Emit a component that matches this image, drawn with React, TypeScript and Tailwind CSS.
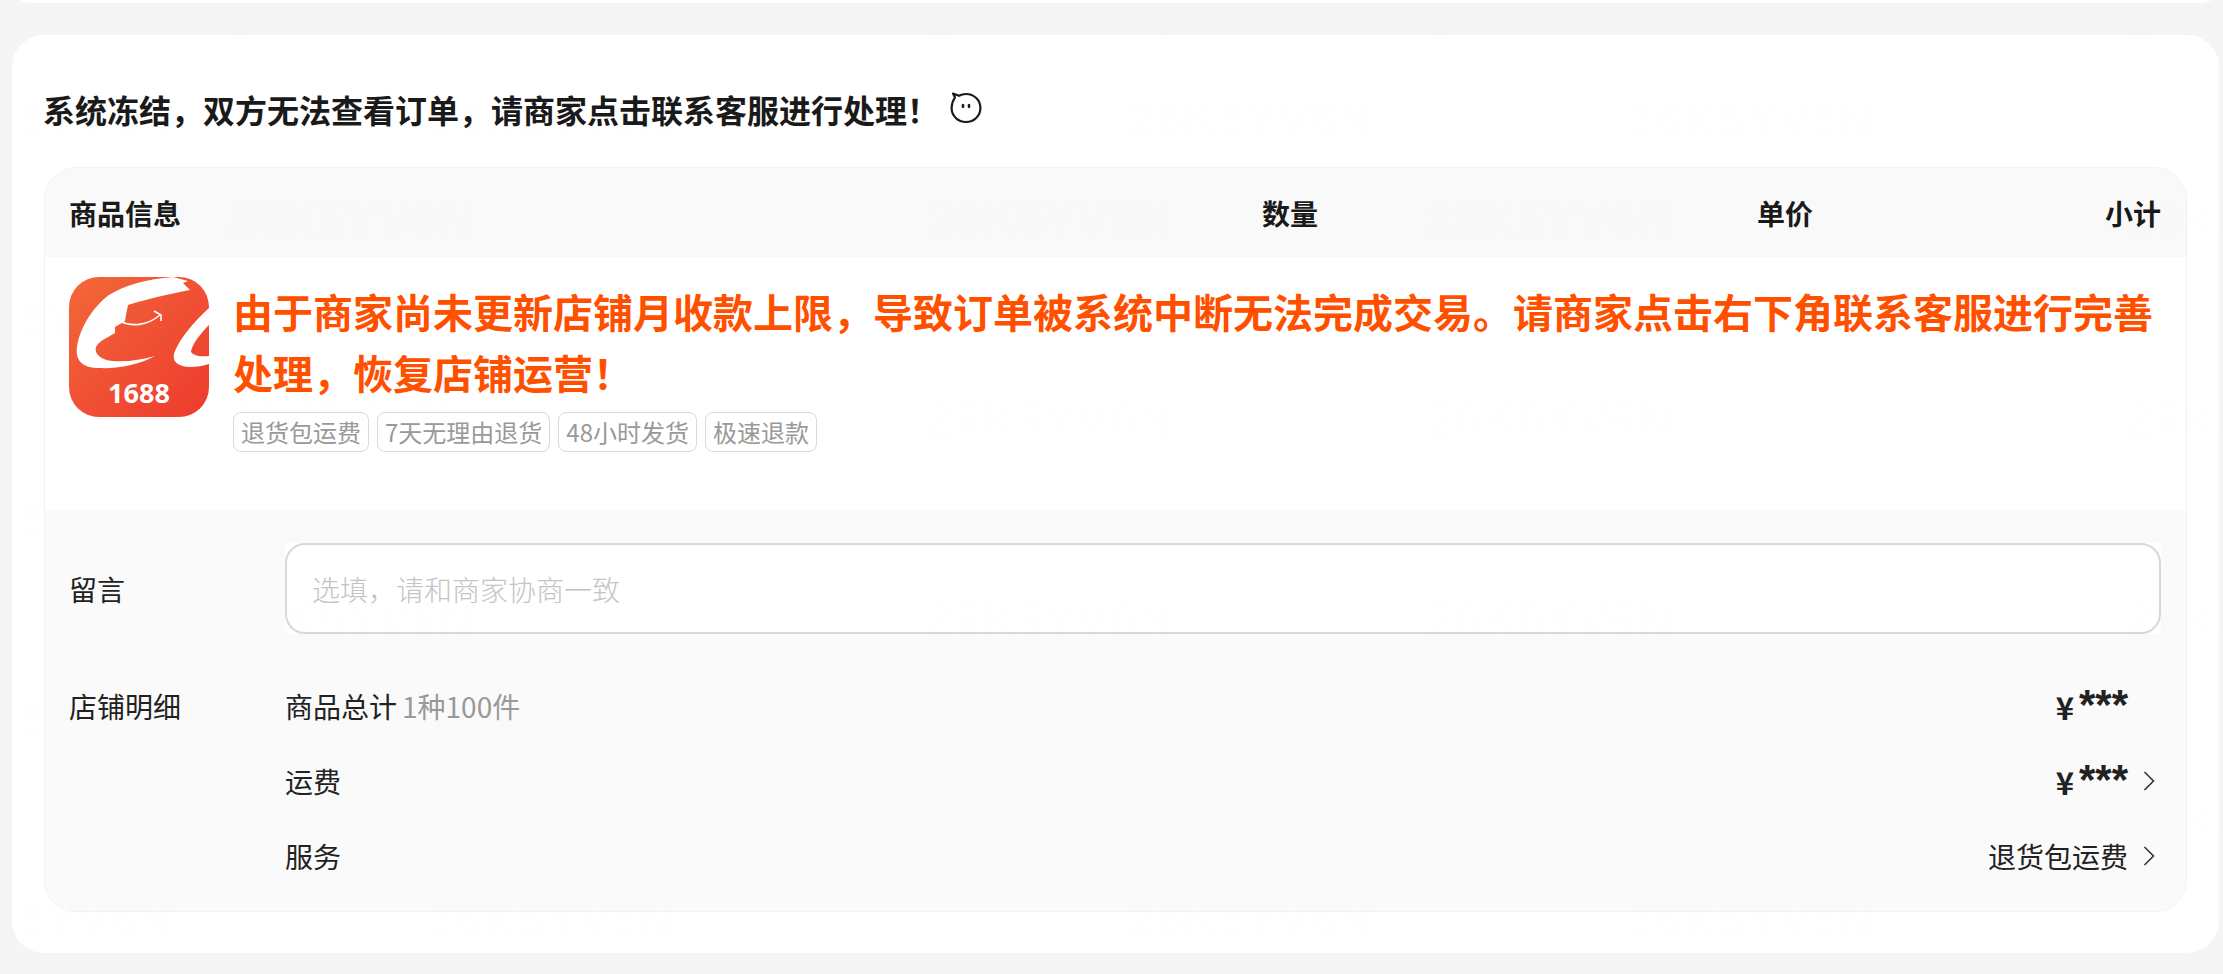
import React from "react";

const odd = [-72, 428, 1128, 1628];
const even = [228, 927, 1427, 2127];
const marks: { x: number; y: number }[] = [];
for (let r = 0; r < 10; r++) {
  for (const x of r % 2 === 0 ? even : odd) marks.push({ x, y: r * 100 - 9 });
}

function Chevron() {
  return (
    <svg width="12" height="20" viewBox="0 0 12 20" fill="none" stroke="#333" strokeWidth="1.6" className="shrink-0">
      <path d="M1.5 1 L10.5 10 L1.5 19" />
    </svg>
  );
}

function Pet() {
  return (
    <svg width="32" height="32" viewBox="0 0 32 32" fill="none" className="ml-[11px] -mt-[2px] shrink-0">
      <path d="M5 5.5 C2.6 9 1.6 12 1.6 16 C1.6 24 8 30 16 30 C24 30 30.4 24 30.4 16 C30.4 8 24 2 16 2 C13.4 2 11 2.6 9 3.8 L3 1.6 Z" stroke="#1a1a1a" strokeWidth="2.2" strokeLinejoin="round" />
      <ellipse cx="13" cy="14" rx="1.4" ry="2.2" fill="#1a1a1a" />
      <ellipse cx="19" cy="14" rx="1.4" ry="2.2" fill="#1a1a1a" />
    </svg>
  );
}

function Logo() {
  return (
    <svg width="140" height="140" viewBox="0 0 140 140" className="shrink-0">
      <defs>
        <linearGradient id="lg" x1="0" y1="0" x2="1" y2="1">
          <stop offset="0" stopColor="#f26839" />
          <stop offset="1" stopColor="#ee3a2e" />
        </linearGradient>
        <clipPath id="lc">
          <rect width="140" height="140" rx="30" />
        </clipPath>
      </defs>
      <g clipPath="url(#lc)">
        <rect width="140" height="140" fill="url(#lg)" />
        <path d="M119 4 L104 0 C78 2 56 8 40 18 C24 30 11 50 8 70 C6 84 14 91 30 91 C50 92 72 87 86 79 C72 83 58 85 44 84 C32 83 25 77 27 70 C30 64 36 62 46 56 L46 50 L56 44 L57 38 L59 28 C78 22 100 17 121 13 L114 6 Z" fill="#fff" />
        <path d="M140 31 C124 46 112 60 106 74 C102 84 108 89 120 90 C128 90 134 89 140 87 L140 79 C130 80 122 78 122 74 C124 66 132 56 140 48 Z" fill="#fff" />
        <path d="M51 44 C62 50 78 49 91 38 M85 34 L92 38 L92 44" stroke="#fff" strokeWidth="1.6" fill="none" />
        <text x="70" y="126" textAnchor="middle" fill="#fff" fontSize="27" fontWeight="700" fontFamily="'Noto Sans', sans-serif">1688</text>
      </g>
    </svg>
  );
}

function Tag({ children }: { children: React.ReactNode }) {
  return (
    <span className="h-[40px] px-[7px] border border-[#d9d9d9] rounded-[8px] text-[24px] leading-[38px] text-[#999999] whitespace-nowrap">
      {children}
    </span>
  );
}

function Price() {
  return (
    <span className="flex items-start h-[42px] font-bold text-[#222222]">
      <span className="text-[31px] leading-[42px] mt-[1px]">¥</span>
      <span className="ml-[5px] -mt-[1px] text-[42px] leading-[42px] font-['Liberation_Sans']">***</span>
    </span>
  );
}

export default function App() {
  return (
    <div className="relative h-[974px] overflow-hidden bg-[#f5f5f5] font-['Noto_Sans_CJK_SC','Noto_Sans',sans-serif] text-[#222222]">
      <div className="ml-[12px] mr-[4px] h-[36px] -mt-[33px] bg-white rounded-[32px]" />

      <section className="mt-[32px] ml-[12px] mr-[4px] h-[918px] bg-white rounded-[32px] pt-[50px] pl-[31px] pr-[32px]">
        <h2 className="flex items-center h-[48px] text-[32px] leading-[48px] font-bold text-[#1a1a1a]">
          系统冻结，双方无法查看订单，请商家点击联系客服进行处理！
          <Pet />
        </h2>

        <div className="mt-[34px] ml-[1px] h-[745px] border border-[#f2f2f2] rounded-[32px] overflow-hidden flex flex-col">
          <div className="h-[89px] shrink-0 bg-[#f9f9f9] flex items-center pl-[24px] pr-[25px] text-[28px] font-bold text-[#1a1a1a]">
            <div className="flex-1">商品信息</div>
            <div className="w-[56px] mr-[439px] text-right whitespace-nowrap">数量</div>
            <div className="w-[56px] mr-[292px] text-right whitespace-nowrap">单价</div>
            <div className="w-[56px] text-right whitespace-nowrap">小计</div>
          </div>

          <div className="h-[253px] shrink-0 bg-white flex gap-[24px] pl-[24px] pr-[25px] pt-[20px]">
            <Logo />
            <div className="flex-1 min-w-0">
              <p className="text-[40px] leading-[61px] font-bold text-[#ff5000] -mr-[4px] mt-[4px]">
                由于商家尚未更新店铺月收款上限，导致订单被系统中断无法完成交易。请商家点击右下角联系客服进行完善处理，恢复店铺运营！
              </p>
              <div className="flex gap-[8px] mt-[9px]">
                <Tag>退货包运费</Tag>
                <Tag>7天无理由退货</Tag>
                <Tag>48小时发货</Tag>
                <Tag>极速退款</Tag>
              </div>
            </div>
          </div>

          <div className="flex-1 bg-[#fafafa] pl-[24px] pr-[25px] pt-[33px] text-[28px] leading-[42px]">
            <div className="flex items-center">
              <div className="w-[216px] shrink-0 text-[#222222]">留言</div>
              <div className="flex-1 h-[91px] bg-white">
                <input
                  readOnly
                  placeholder="选填，请和商家协商一致"
                  className="w-full h-full rounded-[20px] border-2 border-[#d8d8d8] px-[25px] text-[28px] font-light outline-none bg-white placeholder:text-[#c4c4c4]"
                />
              </div>
            </div>

            <div className="flex mt-[51px]">
              <div className="w-[216px] shrink-0">店铺明细</div>
              <div className="flex-1 flex flex-col gap-[33px] pr-[6px]">
                <div className="flex justify-between items-center h-[42px]">
                  <div>
                    商品总计<span className="ml-[5px] text-[#999999]">1种100件</span>
                  </div>
                  <div className="flex items-center gap-[15px]">
                    <Price />
                    <span className="w-[12px]" />
                  </div>
                </div>
                <div className="flex justify-between items-center h-[42px]">
                  <div>运费</div>
                  <div className="flex items-center gap-[15px]">
                    <Price />
                    <Chevron />
                  </div>
                </div>
                <div className="flex justify-between items-center h-[42px]">
                  <div>服务</div>
                  <div className="flex items-center gap-[15px]">
                    <span>退货包运费</span>
                    <Chevron />
                  </div>
                </div>
              </div>
            </div>
          </div>
        </div>
      </section>

      <div className="absolute inset-0 pointer-events-none overflow-hidden" aria-hidden="true">
        {marks.map((m, i) => (
          <span
            key={i}
            className="absolute text-[49px] leading-[56px] font-bold font-['Liberation_Sans'] text-black/[0.005] whitespace-nowrap"
            style={{ left: m.x, top: m.y }}
          >
            26K5YV6N
          </span>
        ))}
      </div>
    </div>
  );
}
